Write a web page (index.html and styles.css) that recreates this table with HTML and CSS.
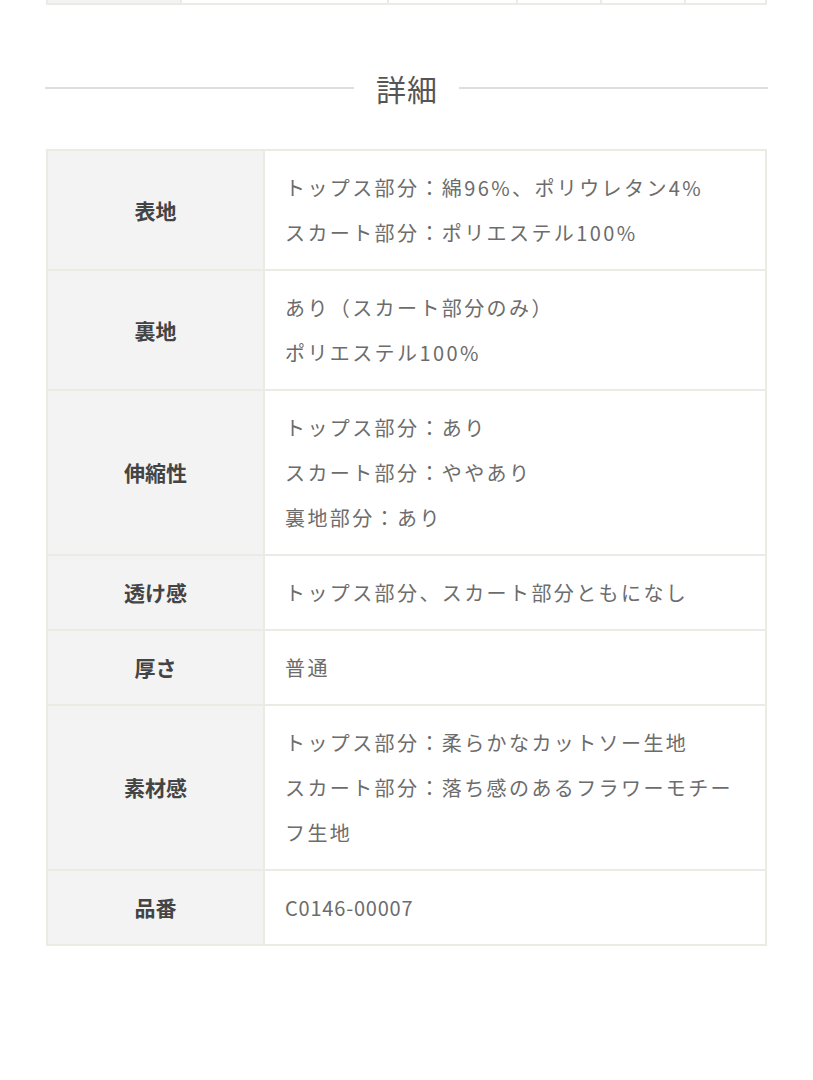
FILE: index.html
```html
<!DOCTYPE html>
<html lang="ja">
<head>
<meta charset="utf-8">
<link rel="stylesheet" href="styles.css">
</head>
<body>
<div class="page">
  <div class="prev-table">
    <div class="prev-cell prev-label"></div>
    <div class="prev-cell w1"></div>
    <div class="prev-cell w2"></div>
    <div class="prev-cell w3"></div>
    <div class="prev-cell w3"></div>
    <div class="prev-cell w3 last"></div>
  </div>

  <h2 class="section-title"><span class="rule"></span><span class="title-text">詳細</span><span class="rule"></span></h2>

  <table class="spec">
    <tr>
      <th>表地</th>
      <td>トップス部分：綿96%、ポリウレタン4%<br>スカート部分：ポリエステル100%</td>
    </tr>
    <tr>
      <th>裏地</th>
      <td>あり（スカート部分のみ）<br>ポリエステル100%</td>
    </tr>
    <tr>
      <th>伸縮性</th>
      <td>トップス部分：あり<br>スカート部分：ややあり<br>裏地部分：あり</td>
    </tr>
    <tr>
      <th>透け感</th>
      <td>トップス部分、スカート部分ともになし</td>
    </tr>
    <tr>
      <th>厚さ</th>
      <td>普通</td>
    </tr>
    <tr>
      <th>素材感</th>
      <td>トップス部分：柔らかなカットソー生地<br>スカート部分：落ち感のあるフラワーモチーフ生地</td>
    </tr>
    <tr>
      <th>品番</th>
      <td class="code">C0146-00007</td>
    </tr>
  </table>
</div>
</body>
</html>
```

FILE: styles.css
```css
* { box-sizing: border-box; }
html, body {
  margin: 0;
  padding: 0;
  background: #fff;
}
body {
  font-family: "Noto Sans CJK JP", "Noto Sans", sans-serif;
  color: #666;
}
.page {
  padding: 0 45px;
}
.prev-table {
  display: flex;
  height: 5px;
  margin: 0 1px;
  border: 2px solid #ebebe5;
  border-top: none;
}
.prev-cell {
  border-right: 2px solid #ebebe5;
}
.prev-label {
  width: 134px;
  background: #f3f3f3;
}
.w1 { width: 207px; }
.w2 { width: 129px; }
.w3 { width: 84px; }
.last { flex: 1; border-right: none; }

.section-title {
  display: flex;
  align-items: center;
  margin: 63px 0 41px;
  font-size: 30px;
  font-weight: 400;
  line-height: 40px;
  color: #555;
}
.rule {
  flex: 1;
  height: 2px;
  background: #dedede;
}
.title-text {
  margin: 0 21px 0 22px;
  letter-spacing: 1px;
}

.spec {
  width: calc(100% - 2px);
  margin: 0 1px;
  border-collapse: collapse;
  border: 2px solid #ebebe5;
}
.spec th,
.spec td {
  border: 2px solid #ebebe5;
  padding: 14px 20px;
  font-size: 20px;
  line-height: 45px;
  vertical-align: middle;
}
.spec th {
  width: 217px;
  background: #f3f3f3;
  color: #444;
  font-weight: 700;
  font-size: 21px;
  text-align: center;
}
.spec td {
  background: #fff;
  color: #6c6c6c;
  font-weight: 400;
  letter-spacing: 2.4px;
  text-align: left;
}
.spec td.code {
  letter-spacing: 0.8px;
}
```
